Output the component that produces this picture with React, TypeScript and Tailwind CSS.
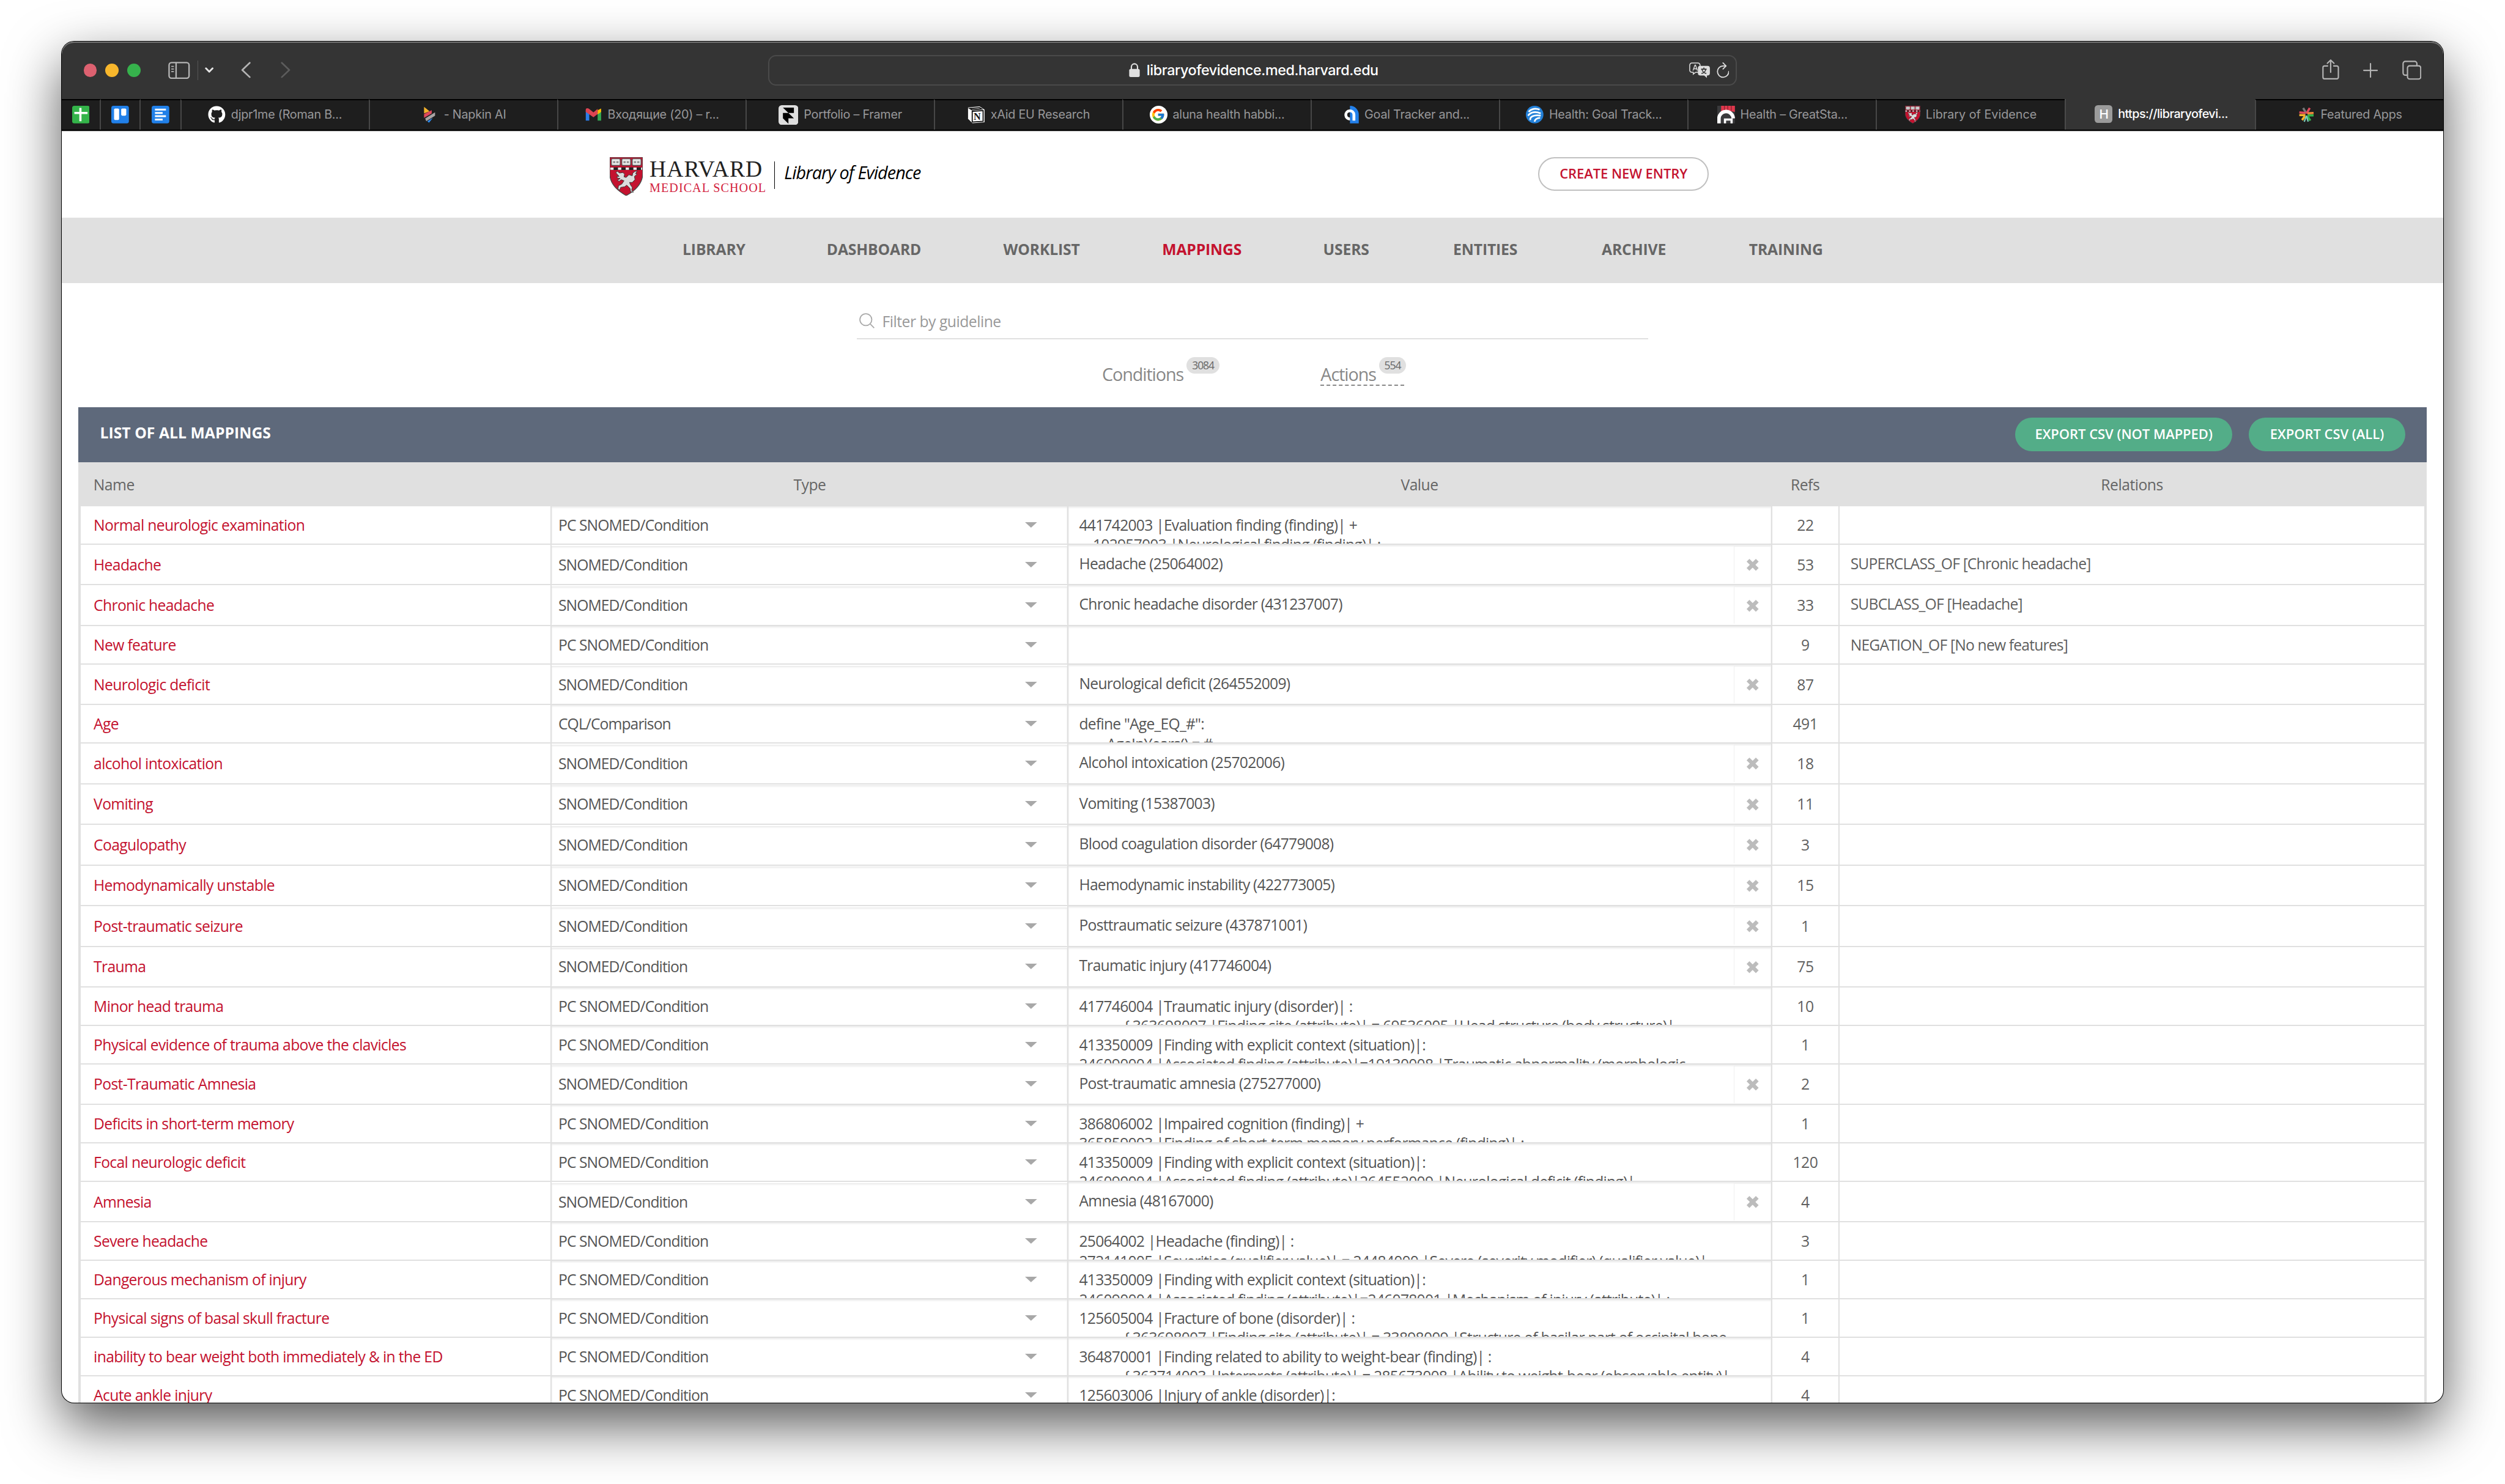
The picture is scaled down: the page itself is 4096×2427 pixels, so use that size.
import React from 'react';
import { FaGithub } from 'react-icons/fa';
import { FcGoogle } from 'react-icons/fc';

const rootStyle = 'html{font-size:28.744px}';

type Row = {
  name: string;
  type: string;
  value: string;
  refs: number;
  relation?: string;
  coded?: boolean;
};

const rows: Row[] = [
  { name: 'Normal neurologic examination', type: 'PC SNOMED/Condition', value: '441742003 |Evaluation finding (finding)| +\n    102957003 |Neurological finding (finding)| :', refs: 22 },
  { name: 'Headache', type: 'SNOMED/Condition', value: 'Headache (25064002)', refs: 53, relation: 'SUPERCLASS_OF [Chronic headache]', coded: true },
  { name: 'Chronic headache', type: 'SNOMED/Condition', value: 'Chronic headache disorder (431237007)', refs: 33, relation: 'SUBCLASS_OF [Headache]', coded: true },
  { name: 'New feature', type: 'PC SNOMED/Condition', value: '', refs: 9, relation: 'NEGATION_OF [No new features]' },
  { name: 'Neurologic deficit', type: 'SNOMED/Condition', value: 'Neurological deficit (264552009)', refs: 87, coded: true },
  { name: 'Age', type: 'CQL/Comparison', value: 'define "Age_EQ_#":\n        AgeInYears() = #', refs: 491 },
  { name: 'alcohol intoxication', type: 'SNOMED/Condition', value: 'Alcohol intoxication (25702006)', refs: 18, coded: true },
  { name: 'Vomiting', type: 'SNOMED/Condition', value: 'Vomiting (15387003)', refs: 11, coded: true },
  { name: 'Coagulopathy', type: 'SNOMED/Condition', value: 'Blood coagulation disorder (64779008)', refs: 3, coded: true },
  { name: 'Hemodynamically unstable', type: 'SNOMED/Condition', value: 'Haemodynamic instability (422773005)', refs: 15, coded: true },
  { name: 'Post-traumatic seizure', type: 'SNOMED/Condition', value: 'Posttraumatic seizure (437871001)', refs: 1, coded: true },
  { name: 'Trauma', type: 'SNOMED/Condition', value: 'Traumatic injury (417746004)', refs: 75, coded: true },
  { name: 'Minor head trauma', type: 'PC SNOMED/Condition', value: '417746004 |Traumatic injury (disorder)| :\n             { 363698007 |Finding site (attribute)| = 69536005 |Head structure (body structure)|', refs: 10 },
  { name: 'Physical evidence of trauma above the clavicles', type: 'PC SNOMED/Condition', value: '413350009 |Finding with explicit context (situation)|:\n246090004 |Associated finding (attribute)|=19130008 |Traumatic abnormality (morphologic', refs: 1 },
  { name: 'Post-Traumatic Amnesia', type: 'SNOMED/Condition', value: 'Post-traumatic amnesia (275277000)', refs: 2, coded: true },
  { name: 'Deficits in short-term memory', type: 'PC SNOMED/Condition', value: '386806002 |Impaired cognition (finding)| +\n365859003 |Finding of short-term memory performance (finding)| :', refs: 1 },
  { name: 'Focal neurologic deficit', type: 'PC SNOMED/Condition', value: '413350009 |Finding with explicit context (situation)|:\n246090004 |Associated finding (attribute)|264552009 |Neurological deficit (finding)|', refs: 120 },
  { name: 'Amnesia', type: 'SNOMED/Condition', value: 'Amnesia (48167000)', refs: 4, coded: true },
  { name: 'Severe headache', type: 'PC SNOMED/Condition', value: '25064002 |Headache (finding)| :\n272141005 |Severities (qualifier value)| = 24484000 |Severe (severity modifier) (qualifier value)|', refs: 3 },
  { name: 'Dangerous mechanism of injury', type: 'PC SNOMED/Condition', value: '413350009 |Finding with explicit context (situation)|:\n246090004 |Associated finding (attribute)|=246078001 |Mechanism of injury (attribute)| :', refs: 1 },
  { name: 'Physical signs of basal skull fracture', type: 'PC SNOMED/Condition', value: '125605004 |Fracture of bone (disorder)| :\n             { 363698007 |Finding site (attribute)| = 33898009 |Structure of basilar part of occipital bone', refs: 1 },
  { name: 'inability to bear weight both immediately & in the ED', type: 'PC SNOMED/Condition', value: '364870001 |Finding related to ability to weight-bear (finding)| :\n             { 363714003 |Interprets (attribute)| = 285673008 |Ability to weight-bear (observable entity)|', refs: 4 },
  { name: 'Acute ankle injury', type: 'PC SNOMED/Condition', value: '125603006 |Injury of ankle (disorder)|:', refs: 4 },
];

const nav = [
  { label: 'LIBRARY', width: 'w-[3.6rem]' },
  { label: 'DASHBOARD', width: 'w-[5.2rem]' },
  { label: 'WORKLIST', width: 'w-[4.47rem]' },
  { label: 'MAPPINGS', width: 'w-[4.37rem]' },
  { label: 'USERS', width: 'w-[2.65rem]' },
  { label: 'ENTITIES', width: 'w-[3.78rem]' },
  { label: 'ARCHIVE', width: 'w-[3.72rem]' },
  { label: 'TRAINING', width: 'w-[4.18rem]' },
];

const Shield = ({ className }: { className: string }) => (
  <svg viewBox="0 0 60 70" className={className}>
    <path d="M0 0H60V30C60 48 48 60 30 70C12 60 0 48 0 30Z" fill="#c4122f" stroke="#4a4a4a" strokeWidth="1.5" />
    <g fill="#e8e8e8" stroke="#555" strokeWidth="1.5">
      <rect x="3" y="3" width="16" height="12" rx="2" />
      <rect x="22" y="3" width="16" height="12" rx="2" />
      <rect x="41" y="3" width="16" height="12" rx="2" />
    </g>
    <path d="M6 9h4M12 9h4M25 9h4M31 9h4M44 9h4M50 9h4" stroke="#888" strokeWidth="3" />
    <path d="M1 21H59" stroke="#222" strokeWidth="4.5" />
    <path d="M1 21H59" stroke="#f0f0f0" strokeWidth="4" strokeDasharray="6 8" />
    <path
      d="M11 28l3-2 4 3 6-1 3 3-1 5 4 1 5-5 6 2 1-5 4-3 4-1-3 5 3 1-5 4 1 6-5 5-5 0 2 5 3 4-1 5 3 4-5-1-1-6-6-6-4 3-7 1-2 5-3-2 1-6 6-3 4-6-5-2-4 3-3-2 5-3-5-1-1-3 4 0z"
      fill="#dcdcdc"
      stroke="#3a3a3a"
      strokeWidth="1.1"
    />
  </svg>
);

const Tab = ({ icon, children, active }: { icon: React.ReactNode; children: React.ReactNode; active?: boolean }) => (
  <div
    className={
      active
        ? 'flex flex-1 items-center justify-center gap-1.25 border-l-2 border-[#4a4a4a] bg-[#343434] pl-0.5 font-medium tracking-[-0.028em] text-white'
        : 'flex flex-1 items-center justify-center gap-1.25 border-l-2 border-t-2 border-l-[#474747] border-t-black text-[#98989a]'
    }
  >
    {icon}
    <span className="whitespace-nowrap">{children}</span>
  </div>
);

const PinnedTab = ({ children }: { children: React.ReactNode }) => (
  <div className="flex w-9 items-center justify-center border-r-2 border-t-2 border-r-[#474747] border-t-black">{children}</div>
);

const TitleBar = () => (
  <div className="flex h-13 items-center rounded-t-[0.7rem] bg-[#343434] pl-5 pr-5 shadow-[inset_0_2px_0_#737373]">
    <div className="flex w-161 items-center">
      <div className="flex gap-2">
        <div className="size-3 rounded-full bg-[#dd6170]" />
        <div className="size-3 rounded-full bg-[#f8b72c]" />
        <div className="size-3 rounded-full bg-[#36b24c]" />
      </div>
      <svg viewBox="0 0 20 16" fill="none" stroke="#b4b4b4" strokeWidth="1.3" className="ml-6.25 h-4 w-5">
        <rect x="0.8" y="0.8" width="18.2" height="14.2" rx="2.2" />
        <path d="M7.2 1v14" />
        <path d="M2.8 4.2h2.4M2.8 6.6h2.4M2.8 9h2.4" strokeWidth="1" />
      </svg>
      <div className="ml-1.75 h-4.5 w-px bg-[#555]" />
      <svg viewBox="0 0 8 5" fill="none" stroke="#e6e6e6" strokeWidth="1.6" strokeLinecap="round" strokeLinejoin="round" className="ml-1.5 h-1.25 w-2">
        <path d="M1 1l3 3 3-3" />
      </svg>
      <svg viewBox="0 0 9 15" fill="none" stroke="#b4b4b4" strokeWidth="1.5" strokeLinecap="round" strokeLinejoin="round" className="ml-6.25 h-3.75 w-2.25">
        <path d="M8 1L1.2 7.5 8 14" />
      </svg>
      <svg viewBox="0 0 9 15" fill="none" stroke="#5c5c5c" strokeWidth="1.5" strokeLinecap="round" strokeLinejoin="round" className="ml-6.75 h-3.75 w-2.25">
        <path d="M1 1l6.8 6.5L1 14" />
      </svg>
    </div>
    <div className="relative -ml-5.25 flex h-7 w-220.5 items-center rounded-[0.45rem] border-2 border-[#4a4a4a] pl-[20.47rem]">
      <svg viewBox="0 0 10 13" className="h-3.25 w-2.5">
        <rect x="0.2" y="5.4" width="9.6" height="7.4" rx="1.4" fill="#e0e0e0" />
        <path d="M2.2 6V3.6a2.8 2.8 0 015.6 0V6" fill="none" stroke="#e0e0e0" strokeWidth="1.2" />
      </svg>
      <span className="ml-1.5 text-[0.8125rem] font-medium tracking-[-0.019em] text-white">libraryofevidence.med.harvard.edu</span>
      <div className="absolute right-[0.38rem] flex items-center gap-1.5">
        <svg viewBox="0 0 38 29" className="h-[0.9rem] w-[1.18rem]">
          <path d="M5 1.2h11a4 4 0 014 4v9a4 4 0 01-4 4h-4L7.500 21.500V18.200H5a4 4 0 01-4-4v-9a4 4 0 014-4z" fill="none" stroke="#dedede" strokeWidth="1.7" />
          <path d="M7 15l3.600-10h1L15 15M8.200 11.800h5.600" fill="none" stroke="#dedede" strokeWidth="1.6" />
          <path d="M20 6.500h14a4 4 0 014 4v9.500a4 4 0 01-4 4h-1.500v4.500l-5-4.500H20a4 4 0 01-4-4v-9.500a4 4 0 014-4z" fill="#dedede" />
          <path d="M27 9.500v3M22 12.500h10M23.500 13c1 4 4 6.500 8 7.500M30.500 13c-1 4-4 6.500-8 7.500" fill="none" stroke="#343434" strokeWidth="1.8" />
        </svg>
        <svg viewBox="0 0 23 28" fill="none" stroke="#dedede" strokeWidth="2" strokeLinecap="round" strokeLinejoin="round" className="h-3.5 w-[0.72rem]">
          <path d="M22 16.500A10.300 10.300 0 1111.500 6.500h5" />
          <path d="M11.500 1l5.500 5.500-5.500 5.500" />
        </svg>
      </div>
    </div>
    <div className="ml-auto flex items-center gap-5.5">
      <svg viewBox="0 0 31 37" fill="none" stroke="#b4b4b4" strokeWidth="2.4" strokeLinecap="round" strokeLinejoin="round" className="mb-[0.1rem] h-[1.16rem] w-[0.97rem]">
        <path d="M10 12H4.500a3 3 0 00-3 3v17.500a3 3 0 003 3h22a3 3 0 003-3V15a3 3 0 00-3-3H21" />
        <path d="M15.500 23.500V1.500M9.500 7.300l6-6 6 6" />
      </svg>
      <svg viewBox="0 0 27 27" stroke="#b4b4b4" strokeWidth="2.4" strokeLinecap="round" className="size-[0.84rem]">
        <path d="M13.500 1.200v24.600M1.200 13.500h24.600" />
      </svg>
      <svg viewBox="0 0 35 35" fill="none" stroke="#b4b4b4" strokeWidth="2.4" className="size-[1.1rem]">
        <rect x="9.500" y="9.500" width="24" height="24" rx="4" />
        <path d="M9 26.500H5.500a4 4 0 01-4-4v-17a4 4 0 014-4h17a4 4 0 014 4V9" />
      </svg>
    </div>
  </div>
);

const TabBar = () => (
  <div className="flex h-7.25 border-b-2 border-black bg-[#1e1e1e] text-[0.6875rem] tracking-[-0.012em]">
    <PinnedTab>
      <svg viewBox="0 0 16 16" className="size-4">
        <rect width="16" height="16" rx="2" fill="#34b44a" />
        <path d="M7.500 2v12M2 6.500h12" stroke="#fff" strokeWidth="2" />
      </svg>
    </PinnedTab>
    <PinnedTab>
      <svg viewBox="0 0 16 16" className="size-4">
        <rect width="16" height="16" rx="2" fill="#2180e8" />
        <rect x="2.500" y="2.500" width="4.600" height="10.500" rx="1" fill="#fff" />
        <rect x="9" y="2.500" width="4.600" height="6.500" rx="1" fill="#fff" />
      </svg>
    </PinnedTab>
    <div className="flex w-9 items-center justify-center border-t-2 border-black">
      <svg viewBox="0 0 16 16" className="size-4">
        <rect width="16" height="16" rx="2" fill="#2180e8" />
        <path d="M3 3.500h10M3 6.500h7M3 9.500h10M3 12.500h7" stroke="#fff" strokeWidth="1.700" />
      </svg>
    </div>
    <Tab icon={<FaGithub className="size-4 text-white" />}>djpr1me (Roman B...</Tab>
    <Tab
      icon={
        <svg viewBox="0 0 16 16" className="size-4">
          <path d="M3 1l5 4-5 2z" fill="#f5b32c" />
          <path d="M3 7.500l7-3.500v3L3 11z" fill="#e0485c" />
          <path d="M4 11.500l9-5.500v3l-8 5z" fill="#a9a4a4" />
          <path d="M6 14l5-3-3.500 4.500z" fill="#2c8cf0" />
        </svg>
      }
    >
      - Napkin AI
    </Tab>
    <Tab
      icon={
        <svg viewBox="0 0 16 16" className="size-4">
          <path d="M1 4v9.500h3.200V7z" fill="#2b7de9" />
          <path d="M11.800 7v6.500H15V4z" fill="#34a853" />
          <path d="M11.800 4L15 2.500V5.500l-3.200 2.500z" fill="#fbbc04" />
          <path d="M1 5.500V3.500C1 2 2.800 1.800 4 2.800L8 6l3.800-3.200v4.700L8 10.500z" fill="#dd4452" />
        </svg>
      }
    >
      Входящие (20) – r...
    </Tab>
    <Tab
      icon={
        <svg viewBox="0 0 18 18" className="size-4.5">
          <rect width="18" height="18" rx="3" fill="#dedede" />
          <path d="M4 2.200h10v4.900H9zM4 7.100h5l5 4.900H9v4.800L4 12z" fill="#000" />
        </svg>
      }
    >
      Portfolio – Framer
    </Tab>
    <Tab
      icon={
        <svg viewBox="0 0 16 16" className="size-4">
          <path d="M.5 1.500l10.500-1 4.500 3v11.500l-11 .800-4-4z" fill="#fff" />
          <path d="M2 2.500l9-.8 2 1.300-8.800.7zM4.300 5l9.900-.6v9.800l-9.900.6z" fill="none" stroke="#111" />
          <text x="5.600" y="12.800" fontSize="9" fontWeight="700" fontFamily="Liberation Serif, serif" fill="#111">N</text>
        </svg>
      }
    >
      xAid EU Research
    </Tab>
    <Tab
      icon={
        <span className="flex size-4 items-center justify-center rounded-full bg-white">
          <FcGoogle className="size-3.25" />
        </span>
      }
    >
      aluna health habbi...
    </Tab>
    <Tab
      icon={
        <svg viewBox="0 0 16 16" className="size-4">
          <path d="M8 0a8 8 0 108 8v8H8A8 8 0 018 0a8 8 0 018 8v8H8z" fill="#2380ea" />
          <path d="M11.600 13.500V8A3.700 3.700 0 108 12" fill="none" stroke="#fff" strokeWidth="2.600" />
        </svg>
      }
    >
      Goal Tracker and...
    </Tab>
    <Tab
      icon={
        <svg viewBox="0 0 16 16" className="size-4">
          <circle cx="8" cy="8" r="8" fill="#2380d8" />
          <path d="M2.500 5.500C5 2.500 9 2 12.500 3.500M2 9c2.500-3.500 7-4 11.500-2M4 13c-.5-3 3-5 9.500-4M8 14.500c0-2 2-3.500 5-3.500" fill="none" stroke="#fff" strokeWidth="1.500" />
        </svg>
      }
    >
      Health: Goal Track...
    </Tab>
    <Tab
      icon={
        <svg viewBox="0 0 16 16" className="size-4">
          <rect width="16" height="16" fill="#3a3a3c" />
          <path d="M3.500 0H16v5.500L13 5H3.500z" fill="#e0384c" />
          <path d="M6.500 0v4M9.500 0v4M12.700 0v4.500" stroke="#8e2433" strokeWidth=".8" />
          <path d="M1.500 16V12a6.500 6.500 0 0113-.5" fill="none" stroke="#fff" strokeWidth="3.200" />
          <path d="M7 16v-3.500h6V16" fill="none" stroke="#fff" strokeWidth="2" />
        </svg>
      }
    >
      Health – GreatSta...
    </Tab>
    <Tab icon={<Shield className="h-4 w-3.5" />}>
      <span className="tracking-normal">Library of Evidence</span>
    </Tab>
    <Tab active icon={<span className="flex size-4 items-center justify-center rounded-[0.18rem] bg-[#9b9b9b] text-[0.72rem] text-white">H</span>}>
      https://libraryofevi...
    </Tab>
    <Tab
      icon={
        <svg viewBox="0 0 16 16" className="size-4" fill="none" strokeWidth="2">
          <path d="M8 7L5 2" stroke="#777" />
          <path d="M8 7l3-5" stroke="#e0485c" />
          <path d="M7 6.500L1.500 6" stroke="#e0485c" />
          <path d="M9 6.800L14.500 6.500" stroke="#f08a3c" />
          <path d="M7 8.500H1.500M6.500 9.500L4 13" stroke="#f5b32c" />
          <path d="M9 8.800h5.500M9 9.500l2.500 4" stroke="#36b24c" />
          <path d="M8 9l-2 5.500M8 9l1.500 5.500" stroke="#79c9b8" strokeWidth="1.300" />
        </svg>
      }
    >
      Featured Apps
    </Tab>
  </div>
);

const PageHeader = () => (
  <header className="flex h-19.75 border-t border-[#b5b5b5] pl-[31.2rem]">
    <Shield className="mt-[1.46rem] h-8.75 w-7.5" />
    <div className="ml-1.5 mt-[1.46rem] w-[6.6rem] whitespace-nowrap font-['Liberation_Serif',serif]">
      <div className="text-[1.31rem] leading-[1.38rem] tracking-[0.026em] text-[#222]">HARVARD</div>
      <div className="text-[0.7rem] leading-[0.8rem] tracking-[0.052em] text-[#d2203c]">MEDICAL SCHOOL</div>
    </div>
    <div className="ml-2 mt-[1.71rem] h-6.25 w-px bg-black" />
    <div className="ml-[0.53rem] mt-[1.59rem] text-[1rem] italic leading-6 tracking-[-0.031em] text-black">Library of Evidence</div>
    <button className="absolute right-[41.8rem] mt-[1.46rem] h-7.75 w-38.75 whitespace-nowrap rounded-full border-2 border-[#c0c0c0] text-[0.765rem] font-semibold tracking-[-0.003em] text-[#c4122f]">
      CREATE NEW ENTRY
    </button>
  </header>
);

const MappingRow = ({ row }: { row: Row }) => (
  <div className={row.coded ? 'flex h-9.25 border-b-2 border-[#e0e0e0]' : 'flex h-8.75 border-b-2 border-[#e0e0e0]'}>
    <div className="flex w-107.25 items-center border-r-2 border-[#e0e0e0] pl-3 tracking-[-0.027em] text-[#c4122f]">{row.name}</div>
    <div className="flex w-117.5 items-center border-r-2 border-[#e0e0e0]">
      <div className="flex h-8.5 w-full items-center justify-between pl-1.5 pr-6.75 shadow-[inset_0_2px_3px_rgba(0,0,0,0.09)]">
        <span className="tracking-[-0.038em]">{row.type}</span>
        <svg viewBox="0 0 11 5" className="h-1.25 w-2.75">
          <path d="M0 0h11L5.500 5z" fill="#a8a8a8" />
        </svg>
      </div>
    </div>
    <div className="flex w-160.25 border-r-2 border-[#e0e0e0] shadow-[inset_0_2px_3px_rgba(0,0,0,0.09)]">
      <div className="h-8.5 flex-1 overflow-hidden whitespace-pre pl-2.5 pt-[0.52rem] leading-4.5 tracking-[-0.032em]">{row.value}</div>
      {row.coded && (
        <div className="mt-0.25 flex h-8.5 w-8.5 items-center justify-center border-l border-t border-[#f0f0f0]">
          <svg viewBox="0 0 12 12" className="size-3">
            <path d="M1.800 1.800l8.400 8.400M10.200 1.800L1.800 10.200" stroke="#bcbcbc" strokeWidth="3.600" />
          </svg>
        </div>
      )}
    </div>
    <div className="flex w-15.25 items-center justify-center border-r-2 border-[#e0e0e0] text-[#5f5f5f]">{row.refs}</div>
    <div className="flex-1 overflow-hidden pl-2.5 pt-[0.52rem] leading-4.5 tracking-[-0.034em] text-[#5f5f5f]">{row.relation}</div>
  </div>
);

export default function App() {
  return (
    <div className="h-screen w-screen overflow-hidden bg-white pl-14 pt-9.5 font-['Inter',sans-serif]">
      <style>{rootStyle}</style>
      <div className="relative flex h-309.75 w-542 flex-col rounded-[0.7rem] bg-white shadow-[0_0_0_1px_#000,0_1.25rem_3.1rem_rgba(0,0,0,0.66)]">
        <TitleBar />
        <TabBar />
        <div className="min-h-0 flex-1 overflow-hidden rounded-b-[0.7rem] font-['Open_Sans',sans-serif] text-[0.86rem] font-[440] tracking-[-0.02em] text-[#555]">
          <PageHeader />
          <nav className="flex h-15 items-center justify-center gap-[4.7rem] bg-[#e0e0e0] pb-0.5 font-bold tracking-[-0.006em] text-[#666]">
            {nav.map(item => (
              <a
                key={item.label}
                className={item.label === 'MAPPINGS' ? `${item.width} flex justify-center whitespace-nowrap text-[#c4122f]` : `${item.width} flex justify-center whitespace-nowrap`}
              >
                {item.label}
              </a>
            ))}
          </nav>

          <div className="ml-180.5 mt-5 flex h-7.75 w-181 items-start pl-1 pt-1 text-[#999]">
            <svg viewBox="0 0 14 14" fill="none" stroke="#aaa" strokeWidth="1" className="mt-0.75 size-3.5">
              <circle cx="6" cy="6" r="5.400" />
              <path d="M10 10l3.600 3.600" />
            </svg>
            <span className="ml-1.75">Filter by guideline</span>
          </div>
          <div className="-mt-0.5 ml-181 h-0.5 w-180 border-b-2 border-[#e0e0e0]" />

          <div className="flex h-15.5 pl-236.75 pt-4 text-base tracking-[-0.037em] text-[#888]">
            <div className="flex">
              <span className="mt-0.5 w-18.25 whitespace-nowrap leading-7">Conditions</span>
              <span className="ml-1 flex h-3.75 w-7.5 items-center justify-center rounded-full bg-[#e0e0e0] text-[0.61rem] text-[#666]">3084</span>
            </div>
            <div className="ml-23 flex h-6.5 w-19 border-b-2 border-dashed border-[#888]">
              <span className="mt-0.5 w-12.5 whitespace-nowrap leading-7">Actions</span>
              <span className="ml-0.75 flex h-3.75 w-6.25 shrink-0 items-center justify-center rounded-full bg-[#e0e0e0] text-[0.61rem] text-[#666]">554</span>
            </div>
          </div>

          <section className="ml-3.75 w-534.5">
            <div className="flex h-12.5 justify-between bg-[#5e697b] pl-5 pr-5 font-bold text-white">
              <h2 className="pt-3.5 leading-4.5 tracking-[0.002em]">LIST OF ALL MAPPINGS</h2>
              <div className="flex gap-3.75 pt-2.25 text-[0.765rem] font-semibold tracking-[-0.001em]">
                <button className="h-7.75 w-49.5 whitespace-nowrap rounded-full bg-[#53ad88]">EXPORT CSV (NOT MAPPED)</button>
                <button className="h-7.75 w-35.5 whitespace-nowrap rounded-full bg-[#53ad88]">EXPORT CSV (ALL)</button>
              </div>
            </div>
            <div className="flex h-10 items-center bg-[#e0e0e0] text-center text-[#666]">
              <div className="w-107.75 pl-3.5 text-left">Name</div>
              <div className="w-117.5">Type</div>
              <div className="w-160">Value</div>
              <div className="w-15.5">Refs</div>
              <div className="flex-1 pr-0.5">Relations</div>
            </div>
            <div className="border-x-[4px] border-[#e0e0e0]">
              {rows.map(row => (
                <MappingRow key={row.name} row={row} />
              ))}
            </div>
          </section>
        </div>
      </div>
    </div>
  );
}
